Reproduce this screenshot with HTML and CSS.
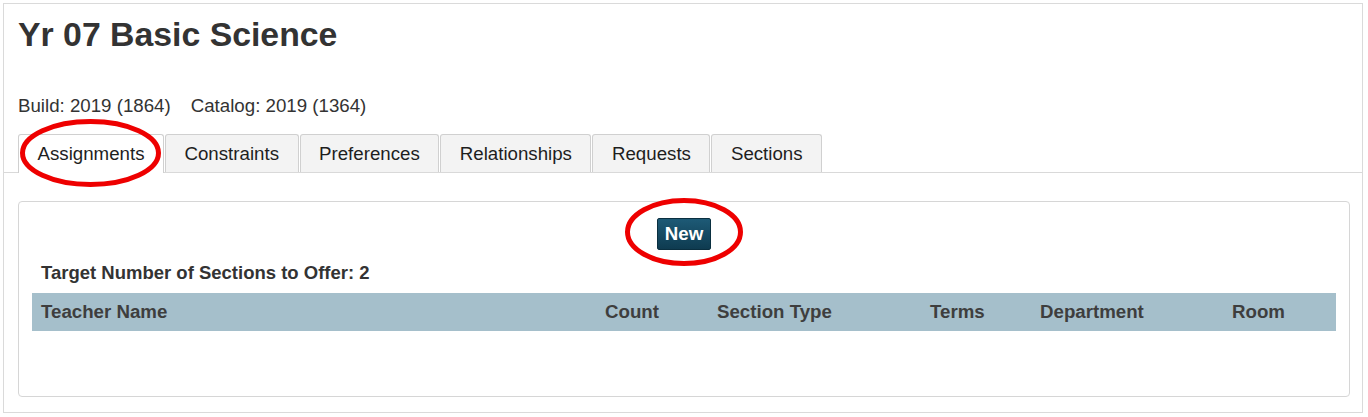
FILE: index.html
```html
<!DOCTYPE html>
<html lang="en">
<head>
<meta charset="utf-8">
<title>Yr 07 Basic Science</title>
<link rel="stylesheet" href="styles.css">
</head>
<body>
<div class="frame">
  <div class="head">
    <h1 class="title">Yr 07 Basic Science</h1>
    <div class="meta"><span>Build: 2019 (1864)</span><span>Catalog: 2019 (1364)</span></div>
  </div>
  <div class="tabs">
    <div class="tab active">Assignments</div>
    <div class="tab">Constraints</div>
    <div class="tab">Preferences</div>
    <div class="tab">Relationships</div>
    <div class="tab">Requests</div>
    <div class="tab">Sections</div>
  </div>
  <div class="panel">
    <div class="actions"><button class="btn">New</button></div>
    <div class="target">Target Number of Sections to Offer: 2</div>
    <table class="grid">
      <colgroup>
        <col class="c1"><col class="c2"><col class="c3"><col class="c4"><col class="c5"><col class="c6">
      </colgroup>
      <thead>
        <tr><th>Teacher Name</th><th>Count</th><th>Section Type</th><th>Terms</th><th>Department</th><th>Room</th></tr>
      </thead>
    </table>
  </div>
</div>
<svg class="marks" width="1368" height="417" viewBox="0 0 1368 417">
  <ellipse cx="90.5" cy="153" rx="68" ry="31.5" fill="none" stroke="#ee0000" stroke-width="5"/>
  <ellipse cx="684" cy="232" rx="56.5" ry="31.5" fill="none" stroke="#ee0000" stroke-width="5"/>
</svg>
</body>
</html>
```

FILE: styles.css
```css
html, body {
  margin: 0;
  padding: 0;
  background: #ffffff;
}
body {
  font-family: "Liberation Sans", Arial, sans-serif;
  font-size: 18.7px;
  color: #333333;
  position: relative;
  width: 1368px;
  height: 417px;
  overflow: hidden;
}
.frame {
  margin: 3px 0 0 3px;
  width: 1358px;
  border: 1px solid #dadada;
  padding: 0 0 15px 0;
}
.head {
  padding: 11px 14px 0 14px;
}
.title {
  margin: 0;
  font-size: 33.8px;
  line-height: 38px;
  font-weight: bold;
  color: #333333;
}
.meta {
  margin-top: 42px;
  line-height: 22px;
  display: flex;
  gap: 20px;
}
.tabs {
  margin-top: 17px;
  display: flex;
  gap: 1px;
  padding-left: 14px;
  border-bottom: 1px solid #d9d9d9;
  height: 38px;
}
.tab {
  height: 37px;
  line-height: 37px;
  padding: 0 18.5px;
  border: 1px solid #d0d0d0;
  border-bottom: none;
  border-radius: 3px 3px 0 0;
  background: #f3f3f3;
  color: #1e1e1e;
  white-space: nowrap;
}
.tab.active {
  background: #ffffff;
  height: 38px;
}
.panel {
  margin: 28px 12px 0 14px;
  border: 1px solid #d6d6d6;
  border-radius: 4px;
  padding: 16px 13px 65px 13px;
}
.actions {
  display: flex;
  justify-content: center;
}
.btn {
  font-family: "Liberation Sans", Arial, sans-serif;
  font-size: 18.7px;
  font-weight: bold;
  color: #ffffff;
  height: 32px;
  padding: 0 6.5px;
  border: 1px solid #0a2f40;
  border-radius: 2px;
  background: linear-gradient(#1d5a76, #0e3b50);
  line-height: 30px;
}
.target {
  margin-top: 12px;
  padding-left: 9px;
  font-weight: bold;
  font-size: 18.5px;
  line-height: 22px;
  color: #333333;
}
.grid {
  margin-top: 9px;
  width: 100%;
  border-collapse: collapse;
  table-layout: fixed;
}
.c1 { width: 564px; }
.c2 { width: 112px; }
.c3 { width: 213px; }
.c4 { width: 110px; }
.c5 { width: 192px; }
.c6 { width: auto; }
.grid th {
  background: #a5bfcb;
  height: 38px;
  padding: 0 0 0 9px;
  text-align: left;
  font-weight: bold;
  color: #3e3e3e;
  line-height: 38px;
  white-space: nowrap;
}
.marks {
  position: absolute;
  top: 0;
  left: 0;
  pointer-events: none;
}
```
